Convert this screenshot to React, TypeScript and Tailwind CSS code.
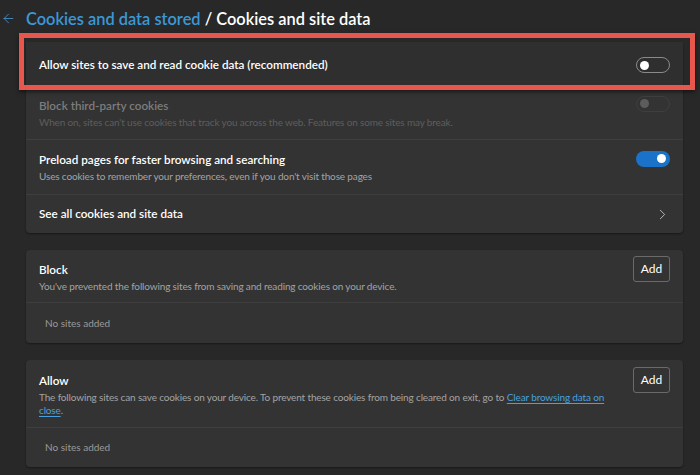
import { ArrowLeft, ChevronRight } from "lucide-react";

type ToggleProps = { state: "off" | "on" | "disabled" };

function Toggle({ state }: ToggleProps) {
  if (state === "on") {
    return (
      <span className="flex h-4 w-[34px] items-center justify-end rounded-full bg-[#1a73c9] px-[4px]">
        <span className="h-[9px] w-[9px] rounded-full bg-white" />
      </span>
    );
  }
  if (state === "disabled") {
    return (
      <span className="flex h-4 w-[34px] items-center rounded-full border border-[#3f3f3f] px-[3px]">
        <span className="h-[9px] w-[9px] rounded-full bg-[#5c5c5c]" />
      </span>
    );
  }
  return (
    <span className="flex h-4 w-[34px] items-center rounded-full border border-[#8a8a8a] px-[3px]">
      <span className="h-[9px] w-[9px] rounded-full bg-white" />
    </span>
  );
}

function AddButton() {
  return (
    <button
      type="button"
      className="h-[26px] w-[37px] rounded-[3px] border border-[#6a6a6a] text-[12px] text-white"
    >
      Add
    </button>
  );
}

export default function App() {
  return (
    <div
      className="min-h-[475px] bg-[#282828] pl-[26px] pr-[17px] text-white"
      style={{ fontFamily: "Lato, 'Noto Sans', sans-serif" }}
    >
      <header className="relative flex h-[42px] items-start pt-[8px]">
        <ArrowLeft className="absolute left-[-25px] top-[11px] h-[15px] w-[15px] text-[#4b9bd6]" strokeWidth={1.25} />
        <h1 className="text-[16.4px] font-semibold leading-[22px]">
          <span className="text-[#3b98d8]">Cookies and data stored</span>
          <span className="text-white"> / Cookies and site data</span>
        </h1>
      </header>

      <section className="rounded-[4px] bg-[#333333] shadow-[0_1px_2px_rgba(0,0,0,0.4)]">
        <div className="relative flex h-[46px] items-center justify-between bg-[#2f2f2f] pl-[13px] pr-[13px]">
          <span className="text-[11.7px] font-semibold">Allow sites to save and read cookie data (recommended)</span>
          <Toggle state="off" />
          <div className="pointer-events-none absolute left-[-7px] right-[-12px] top-[-9px] bottom-[-2px] border-[5px] border-[#e8574e] shadow-[0_2px_4px_rgba(0,0,0,0.5)]" />
        </div>

        <div className="flex h-[52px] items-center justify-between border-b border-[#3e3e3e] pl-[13px] pr-[13px]">
          <div className="flex flex-col gap-[3px]">
            <span className="text-[11.7px] font-semibold leading-[15px] text-[#7d7d7d]">Block third-party cookies</span>
            <span className="text-[10px] leading-[13px] tracking-[-0.15px] text-[#5e5e5e]">
              When on, sites can't use cookies that track you across the web. Features on some sites may break.
            </span>
          </div>
          <div className="mb-[20px]">
            <Toggle state="disabled" />
          </div>
        </div>

        <div className="flex h-[55px] items-center justify-between border-b border-[#3e3e3e] pl-[13px] pr-[13px]">
          <div className="flex flex-col gap-[3px]">
            <span className="text-[11.7px] font-semibold leading-[15px]">Preload pages for faster browsing and searching</span>
            <span className="text-[10px] leading-[13px] tracking-[-0.15px] text-[#a3a3a3]">
              Uses cookies to remember your preferences, even if you don't visit those pages
            </span>
          </div>
          <div className="mb-[17px]">
            <Toggle state="on" />
          </div>
        </div>

        <div className="flex h-[38px] items-center justify-between pl-[13px] pr-[12px]">
          <span className="text-[11.7px] font-semibold">See all cookies and site data</span>
          <ChevronRight className="h-[17px] w-[17px] text-[#c8c8c8]" strokeWidth={1.25} />
        </div>
      </section>

      <section className="mt-[17px] rounded-[4px] bg-[#333333] shadow-[0_1px_2px_rgba(0,0,0,0.4)]">
        <div className="flex h-[53px] items-start justify-between border-b border-[#3e3e3e] pl-[13px] pr-[13px] pt-[6px]">
          <div className="flex flex-col gap-[3px] pt-[6px]">
            <span className="text-[11.7px] font-semibold leading-[15px]">Block</span>
            <span className="text-[10px] leading-[13px] tracking-[-0.15px] text-[#a3a3a3]">
              You've prevented the following sites from saving and reading cookies on your device.
            </span>
          </div>
          <AddButton />
        </div>
        <div className="flex h-[40px] items-center pl-[19px] text-[10px] text-[#9a9a9a]">No sites added</div>
      </section>

      <section className="mt-[17px] rounded-[4px] bg-[#333333] shadow-[0_1px_2px_rgba(0,0,0,0.4)]">
        <div className="flex h-[68px] items-start justify-between border-b border-[#3e3e3e] pl-[13px] pr-[13px] pt-[7px]">
          <div className="flex w-[578px] flex-col gap-[3px] pt-[6px]">
            <span className="text-[11.7px] font-semibold leading-[15px]">Allow</span>
            <span className="text-[10px] leading-[13px] tracking-[-0.15px] text-[#a3a3a3]">
              The following sites can save cookies on your device. To prevent these cookies from being cleared on exit, go to{" "}
              <a className="text-[#4aa0df] underline underline-offset-2">Clear browsing data on close</a>.
            </span>
          </div>
          <AddButton />
        </div>
        <div className="flex h-[39px] items-center pl-[19px] text-[10px] text-[#9a9a9a]">No sites added</div>
      </section>
    </div>
  );
}
